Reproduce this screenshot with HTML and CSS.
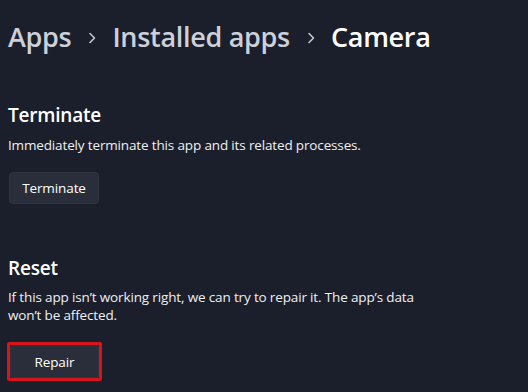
FILE: index.html
```html
<!DOCTYPE html>
<html lang="en">
<head>
<meta charset="utf-8">
<title>Camera</title>
<link rel="stylesheet" href="styles.css">
</head>
<body>
<main class="page">
  <nav class="crumbs">
    <span class="crumb">Apps</span>
    <svg class="chev" viewBox="0 0 8 12" width="8" height="12"><path d="M2 1.5 L6.5 6 L2 10.5" fill="none" stroke="currentColor" stroke-width="1.6" stroke-linecap="round" stroke-linejoin="round"/></svg>
    <span class="crumb">Installed apps</span>
    <svg class="chev" viewBox="0 0 8 12" width="8" height="12"><path d="M2 1.5 L6.5 6 L2 10.5" fill="none" stroke="currentColor" stroke-width="1.6" stroke-linecap="round" stroke-linejoin="round"/></svg>
    <span class="crumb current">Camera</span>
  </nav>

  <section class="group first">
    <h2 class="title">Terminate</h2>
    <p class="desc">Immediately terminate this app and its related processes.</p>
    <button class="btn">Terminate</button>
  </section>

  <section class="group second">
    <h2 class="title">Reset</h2>
    <p class="desc wide">If this app isn’t working right, we can try to repair it. The app’s data won’t be affected.</p>
    <span class="highlight"><button class="btn inner">Repair</button></span>
  </section>
</main>
</body>
</html>
```

FILE: styles.css
```css
html, body {
  margin: 0;
  padding: 0;
  background: #1b1f2b;
}
body {
  width: 528px;
  height: 392px;
  overflow: hidden;
  font-family: "Open Sans", "Noto Sans", "Liberation Sans", sans-serif;
  color: #ffffff;
}
.page {
  display: flex;
  flex-direction: column;
  align-items: flex-start;
  padding: 19px 0 0 8px;
}
.crumbs {
  display: flex;
  align-items: center;
  height: 36px;
  font-size: 27px;
  font-weight: 600;
  line-height: 36px;
  letter-spacing: -0.3px;
  color: #cdd0d9;
}
.chev {
  color: #c3c7d0;
  margin: 2px 16px 0 17px;
  width: 8px;
  height: 12px;
}
.crumb.current {
  color: #ffffff;
}
.group {
  display: flex;
  flex-direction: column;
  align-items: flex-start;
}
.group.first {
  margin-top: 46px;
}
.group.second {
  margin-top: 50px;
}
.title {
  margin: 0;
  font-size: 19px;
  font-weight: 600;
  line-height: 28px;
  letter-spacing: -0.2px;
  color: #ffffff;
}
.desc {
  margin: 7px 0 0 0;
  font-size: 13.5px;
  line-height: 18px;
  color: #eeeff2;
  letter-spacing: -0.15px;
}
.desc.wide {
  width: 430px;
  margin-top: 6px;
}
.btn {
  margin-top: 18px;
  margin-left: 1px;
  width: 90px;
  height: 32px;
  padding: 0;
  border: 1px solid #30343f;
  border-radius: 4px;
  background: #2a2e3a;
  color: #ffffff;
  font-family: inherit;
  font-size: 13.5px;
  letter-spacing: -0.1px;
}
.highlight {
  display: inline-flex;
  margin-top: 18px;
  margin-left: -1px;
  padding: 0;
  border: 3px solid #d5141c;
  border-radius: 2px;
}
.btn.inner {
  margin: 0;
  width: 89px;
  height: 33px;
  border-radius: 2px;
}
```
